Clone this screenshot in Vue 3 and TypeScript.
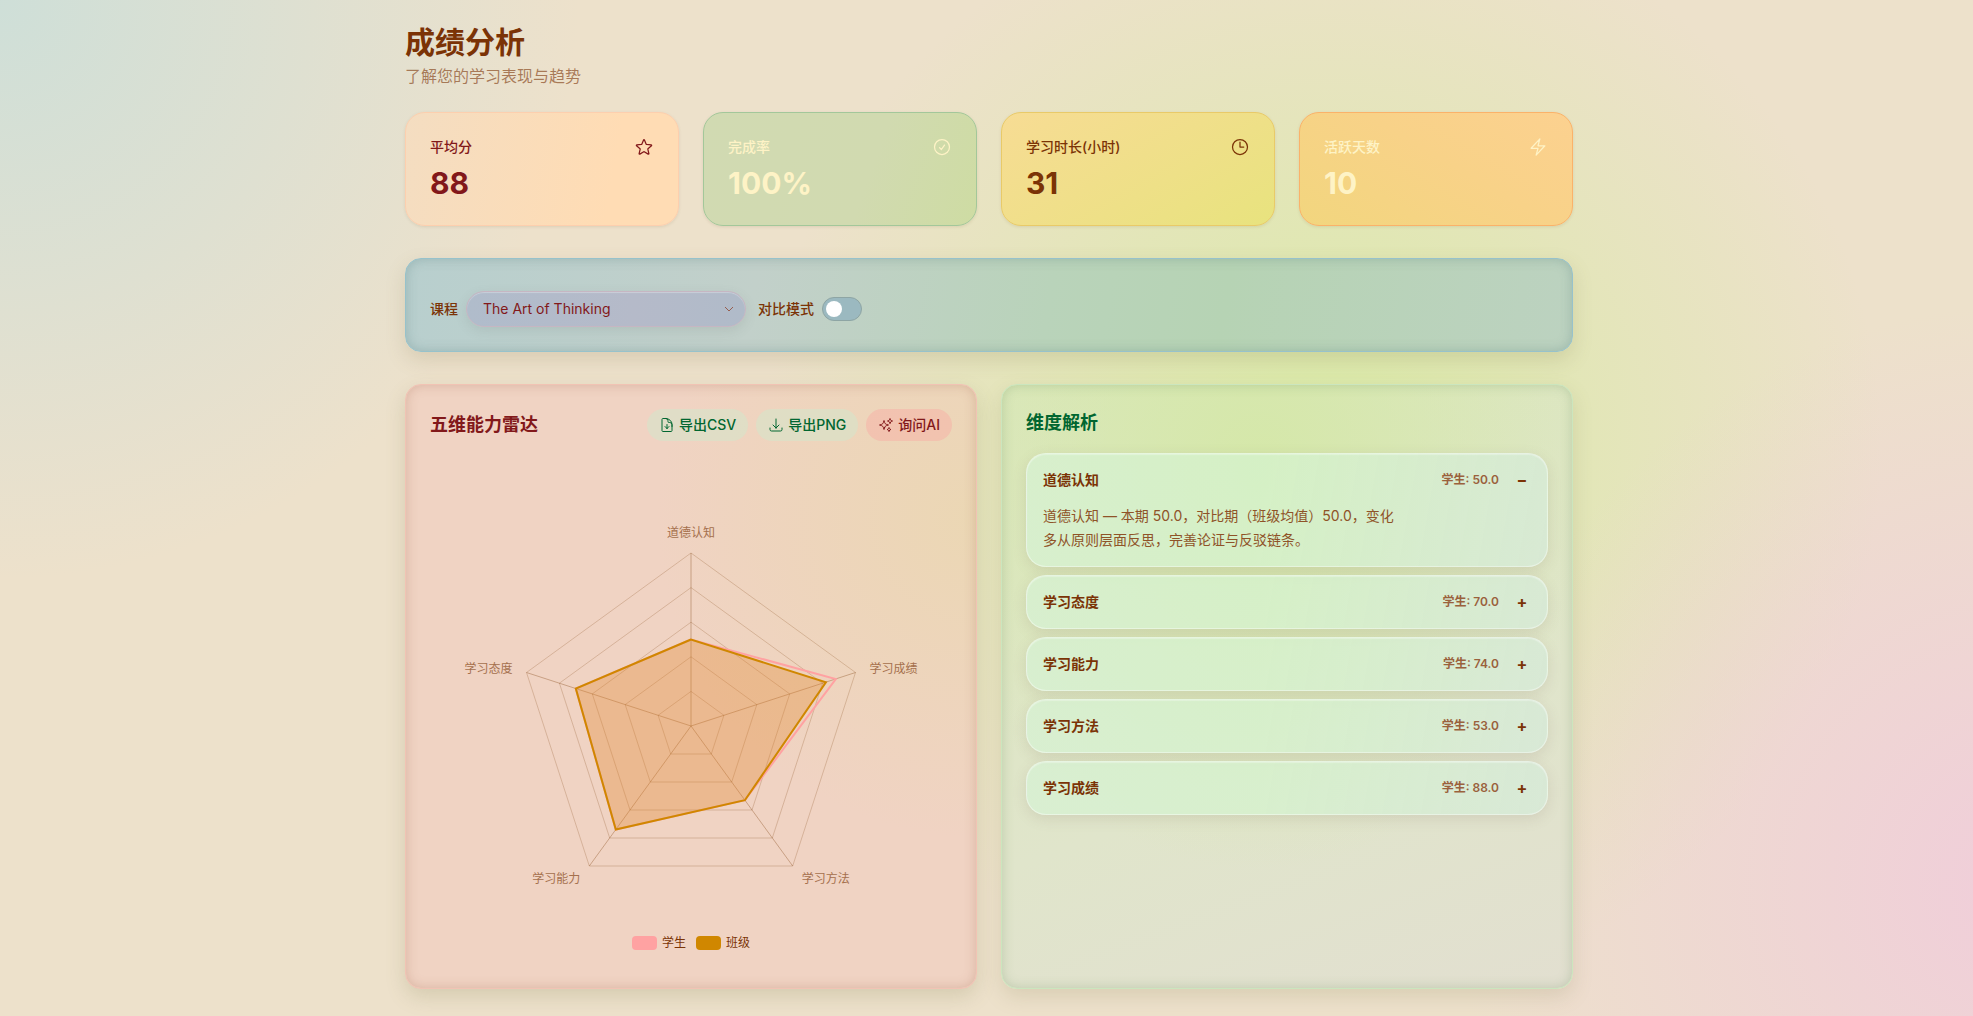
<script setup lang="ts">
import { computed, ref } from 'vue'

interface Stat {
  key: string
  label: string
  value: string
  icon: string
}

interface Dimension {
  name: string
  student: number
  group: number
  advice: string
}

const stats: Stat[] = [
  {
    key: 'average',
    label: '平均分',
    value: '88',
    icon: 'M11.48 3.499a.562.562 0 0 1 1.04 0l2.125 5.111a.563.563 0 0 0 .475.345l5.518.442c.499.04.701.663.321.988l-4.204 3.602a.563.563 0 0 0-.182.557l1.285 5.385a.562.562 0 0 1-.84.61l-4.725-2.885a.562.562 0 0 0-.586 0L6.982 20.54a.562.562 0 0 1-.84-.61l1.285-5.386a.562.562 0 0 0-.182-.557l-4.204-3.602a.562.562 0 0 1 .321-.988l5.518-.442a.563.563 0 0 0 .475-.345L11.48 3.5Z',
  },
  {
    key: 'completion',
    label: '完成率',
    value: '100%',
    icon: 'M9 12.75 11.25 15 15 9.75M21 12a9 9 0 1 1-18 0 9 9 0 0 1 18 0Z',
  },
  {
    key: 'hours',
    label: '学习时长(小时)',
    value: '31',
    icon: 'M12 6v6h4.5m4.5 0a9 9 0 1 1-18 0 9 9 0 0 1 18 0Z',
  },
  {
    key: 'days',
    label: '活跃天数',
    value: '10',
    icon: 'm3.75 13.5 10.5-11.25L12 10.5h8.25L9.75 21.75 12 13.5H3.75Z',
  },
]

const dimensions: Dimension[] = [
  { name: '道德认知', student: 50, group: 50, advice: '多从原则层面反思，完善论证与反驳链条。' },
  { name: '学习态度', student: 70, group: 70, advice: '保持稳定的学习节奏，及时复盘。' },
  { name: '学习能力', student: 74, group: 74, advice: '尝试更高难度的综合任务。' },
  { name: '学习方法', student: 53, group: 53, advice: '总结适合自己的方法并坚持使用。' },
  { name: '学习成绩', student: 88, group: 82, advice: '巩固优势，关注薄弱知识点。' },
]

const courses = ['The Art of Thinking']
const course = ref(courses[0])
const compare = ref(false)
const openName = ref('道德认知')

function toggle(name: string) {
  openName.value = openName.value === name ? '' : name
}

const centre = { x: 261, y: 277 }
const radius = 173

function vertex(index: number, ratio: number) {
  const angle = -Math.PI / 2 - (index * 2 * Math.PI) / dimensions.length
  return {
    x: Math.round((centre.x + Math.cos(angle) * radius * ratio) * 10) / 10,
    y: Math.round((centre.y + Math.sin(angle) * radius * ratio) * 10) / 10,
  }
}

function outline(ratios: number[]) {
  return ratios.map((ratio, i) => `${vertex(i, ratio).x},${vertex(i, ratio).y}`).join(' ')
}

const rings = [0.2, 0.4, 0.6, 0.8, 1].map((ratio) => outline(dimensions.map(() => ratio)))
const spokes = dimensions.map((_, i) => vertex(i, 1))
const studentShape = computed(() => outline(dimensions.map((d) => d.student / 100)))
const groupShape = computed(() => outline(dimensions.map((d) => d.group / 100)))

const anchors = ['middle', 'end', 'end', 'start', 'start'] as const
const axisLabels = dimensions.map((d, i) => {
  const p = vertex(i, 1)
  const side = anchors[i] === 'middle' ? 0 : anchors[i] === 'end' ? -1 : 1
  const low = p.y > centre.y
  return {
    name: d.name,
    anchor: anchors[i],
    x: p.x + side * (low ? 9 : 14),
    y: side === 0 ? p.y - 16 : low ? p.y + 17 : p.y,
  }
})
</script>

<template>
  <div class="page">
    <main class="content">
      <header class="heading">
        <h1>成绩分析</h1>
        <p>了解您的学习表现与趋势</p>
      </header>

      <section class="stats">
        <article v-for="s in stats" :key="s.key" class="stat" :class="s.key">
          <div class="stat-top">
            <span>{{ s.label }}</span>
            <svg class="stat-icon" viewBox="0 0 24 24" aria-hidden="true">
              <path :d="s.icon" />
            </svg>
          </div>
          <strong>{{ s.value }}</strong>
        </article>
      </section>

      <section class="panel filters">
        <div class="field">
          <label for="course">课程</label>
          <div class="select-wrap">
            <select id="course" v-model="course">
              <option v-for="c in courses" :key="c" :value="c">{{ c }}</option>
            </select>
            <svg class="chevron" viewBox="0 0 12 12" aria-hidden="true"><path d="M2 4l4 4 4-4" /></svg>
          </div>
        </div>
        <div class="field">
          <label for="compare">对比模式</label>
          <input id="compare" v-model="compare" class="switch" type="checkbox" role="switch" />
        </div>
      </section>

      <section class="columns">
        <article class="panel radar">
          <div class="panel-head">
            <h2>五维能力雷达</h2>
            <div class="actions">
              <button type="button" class="action export">
                <svg viewBox="0 0 24 24" aria-hidden="true">
                  <path d="M19.5 14.25v-2.625a3.375 3.375 0 0 0-3.375-3.375h-1.5A1.125 1.125 0 0 1 13.5 7.125v-1.5a3.375 3.375 0 0 0-3.375-3.375H8.25m.75 12 3 3m0 0 3-3m-3 3v-6m-1.5-9H5.625c-.621 0-1.125.504-1.125 1.125v17.25c0 .621.504 1.125 1.125 1.125h12.75c.621 0 1.125-.504 1.125-1.125V11.25a9 9 0 0 0-9-9Z" />
                </svg>
                <span>导出CSV</span>
              </button>
              <button type="button" class="action export">
                <svg viewBox="0 0 24 24" aria-hidden="true">
                  <path d="M3 16.5v2.25A2.25 2.25 0 0 0 5.25 21h13.5A2.25 2.25 0 0 0 21 18.75V16.5M16.5 12 12 16.5m0 0L7.5 12m4.5 4.5V3" />
                </svg>
                <span>导出PNG</span>
              </button>
              <button type="button" class="action ask">
                <svg viewBox="0 0 24 24" aria-hidden="true">
                  <path d="M9.813 15.904 9 18.75l-.813-2.846a4.5 4.5 0 0 0-3.09-3.09L2.25 12l2.846-.813a4.5 4.5 0 0 0 3.09-3.09L9 5.25l.813 2.846a4.5 4.5 0 0 0 3.09 3.09L15.75 12l-2.846.813a4.5 4.5 0 0 0-3.09 3.09ZM18.259 8.715 18 9.75l-.259-1.035a3.375 3.375 0 0 0-2.455-2.456L14.25 6l1.036-.259a3.375 3.375 0 0 0 2.455-2.456L18 2.25l.259 1.035a3.375 3.375 0 0 0 2.456 2.456L21.75 6l-1.035.259a3.375 3.375 0 0 0-2.456 2.456ZM16.894 20.567 16.5 21.75l-.394-1.183a2.25 2.25 0 0 0-1.423-1.423L13.5 18.75l1.183-.394a2.25 2.25 0 0 0 1.423-1.423l.394-1.183.394 1.183a2.25 2.25 0 0 0 1.423 1.423l1.183.394-1.183.394a2.25 2.25 0 0 0-1.423 1.423Z" />
                </svg>
                <span>询问AI</span>
              </button>
            </div>
          </div>

          <svg class="chart" viewBox="0 0 522 484" role="img" aria-label="五维能力雷达">
            <polygon v-for="(r, i) in rings" :key="i" class="ring" :points="r" />
            <line
              v-for="(p, i) in spokes"
              :key="i"
              class="spoke"
              :x1="centre.x"
              :y1="centre.y"
              :x2="p.x"
              :y2="p.y"
            />
            <polygon class="student" :points="studentShape" />
            <polygon class="group" :points="groupShape" />
            <text
              v-for="l in axisLabels"
              :key="l.name"
              class="axis"
              :x="l.x"
              :y="l.y"
              :text-anchor="l.anchor"
            >{{ l.name }}</text>
          </svg>
          <ul class="legend">
            <li><i class="swatch pink"></i>学生</li>
            <li><i class="swatch gold"></i>班级</li>
          </ul>
        </article>

        <article class="panel analysis">
          <h2>维度解析</h2>
          <div class="items">
            <section v-for="d in dimensions" :key="d.name" class="item">
              <button
                type="button"
                class="item-head"
                :aria-expanded="openName === d.name"
                @click="toggle(d.name)"
              >
                <span class="item-name">{{ d.name }}</span>
                <span class="item-score">学生: {{ d.student.toFixed(1) }}</span>
                <span class="item-sign">{{ openName === d.name ? '−' : '+' }}</span>
              </button>
              <div v-if="openName === d.name" class="item-body">
                <p>{{ d.name }} — 本期 {{ d.student.toFixed(1) }}，对比期（班级均值）{{ d.group.toFixed(1) }}，变化</p>
                <p>{{ d.advice }}</p>
              </div>
            </section>
          </div>
        </article>
      </section>
    </main>
  </div>
</template>

<style>
body {
  margin: 0;
}
</style>

<style scoped>
* {
  box-sizing: border-box;
}

.page {
  min-height: 100vh;
  padding: 24px 16px 24px 21px;
  background:
    radial-gradient(circle at 0 0, rgba(192, 222, 222, 0.68), rgba(192, 222, 222, 0) 580px),
    radial-gradient(circle at 103% 87%, rgba(241, 200, 222, 0.8), rgba(241, 200, 222, 0) 580px),
    radial-gradient(circle at 67% 44%, rgba(214, 236, 160, 0.85), rgba(214, 236, 160, 0) 560px),
    #ede1cb;
  color: #7b3306;
  font-family: Inter, "Noto Sans CJK SC", sans-serif;
  font-size: 14px;
  line-height: 20px;
}

.content {
  max-width: 1168px;
  margin: 0 auto;
}

h1,
h2,
p,
ul {
  margin: 0;
  padding: 0;
}

h1 {
  font-size: 30px;
  line-height: 36px;
  font-weight: 700;
}

.heading p {
  margin-top: 4px;
  font-size: 16px;
  line-height: 24px;
  color: rgba(123, 51, 6, 0.6);
}

.stats {
  display: grid;
  grid-template-columns: repeat(4, 1fr);
  gap: 24px;
  margin-top: 24px;
}

.stat {
  padding: 24px;
  border: 1px solid;
  border-radius: 20px;
  box-shadow: 0 1px 3px rgba(120, 100, 60, 0.14);
}

.stat-top {
  display: flex;
  align-items: center;
  justify-content: space-between;
  font-weight: 500;
}

.stat strong {
  display: block;
  margin-top: 8px;
  font-size: 30px;
  line-height: 36px;
  font-weight: 700;
}

.stat-icon {
  width: 20px;
  height: 20px;
  fill: none;
  stroke: currentColor;
  stroke-width: 1.5;
  stroke-linecap: round;
  stroke-linejoin: round;
}

.average {
  background: linear-gradient(100deg, #f4ddc1, #ffdcb4 75%);
  border-color: #fdcfae;
  color: #82181a;
}

.completion {
  background: linear-gradient(110deg, #d1dab2, #d1dab0 60%, #cedca3);
  border-color: #a3c79a;
  color: #fef3c6;
}

.hours {
  background: linear-gradient(150deg, #f7dc94, #eee087 60%, #e8e37e);
  border-color: #e9ca68;
  color: #7b3306;
}

.days {
  background: linear-gradient(30deg, #f2d67e, #f8d288 55%, #fcd190);
  border-color: #fbb269;
  color: #fef3c6;
}

.panel {
  border: 1px solid;
  border-radius: 16px;
}

.filters {
  display: flex;
  align-items: center;
  gap: 12px;
  margin-top: 32px;
  padding: 32px 24px 24px;
  background: linear-gradient(100deg, #b8cfce, #c2d0ca 30%, #b9d3ba 55%, #b6d3b4 70%, #bcd2c0);
  border-color: #97c2cb;
  box-shadow:
    inset 0 0 12px rgba(70, 110, 110, 0.28),
    0 8px 20px rgba(120, 110, 70, 0.18);
}

.field {
  display: flex;
  align-items: center;
  gap: 8px;
  font-weight: 500;
}

.select-wrap {
  display: grid;
  width: 280px;
  align-items: center;
}

.select-wrap > * {
  grid-area: 1 / 1;
}

select {
  appearance: none;
  width: 100%;
  height: 36px;
  padding: 0 32px 0 16px;
  border: 1px solid #c6b6c2;
  border-radius: 18px;
  background: linear-gradient(90deg, #b0bccb, #b5bac9 60%, #b0bbc9);
  box-shadow:
    inset 0 1px 1px rgba(255, 255, 255, 0.3),
    0 4px 12px rgba(90, 100, 100, 0.13);
  color: #82181a;
  font: inherit;
  font-weight: 400;
}

.chevron {
  justify-self: end;
  width: 12px;
  height: 12px;
  margin-right: 11px;
  fill: none;
  stroke: #965e50;
  stroke-width: 1;
  pointer-events: none;
}

.switch {
  appearance: none;
  display: flex;
  align-items: center;
  width: 40px;
  height: 24px;
  margin: 0;
  padding: 0 3px;
  border: 1px solid #8ea5a4;
  border-radius: 12px;
  background: #9bb9c0;
}

.switch::before {
  content: "";
  width: 16px;
  height: 16px;
  border-radius: 50%;
  background: #fff;
}

.switch:checked {
  justify-content: flex-end;
}

.columns {
  display: grid;
  grid-template-columns: 1fr 1fr;
  gap: 24px;
  margin-top: 32px;
}

.columns .panel {
  min-height: 605px;
  padding: 24px;
}

h2 {
  font-size: 18px;
  line-height: 28px;
  font-weight: 600;
}

.radar {
  background:
    radial-gradient(circle at 100% 22%, rgba(234, 216, 176, 0.8), rgba(234, 216, 176, 0) 320px),
    #f0d3c3;
  border-color: #f1c3b4;
  box-shadow:
    inset 0 0 12px rgba(150, 90, 60, 0.26),
    0 8px 20px rgba(120, 120, 70, 0.2);
  color: #82181a;
}

.panel-head {
  display: flex;
  align-items: center;
  justify-content: space-between;
}

.actions {
  display: flex;
  gap: 8px;
}

.action {
  display: flex;
  align-items: center;
  gap: 4px;
  height: 32px;
  padding: 0 12px;
  border: 0;
  border-radius: 16px;
  font: inherit;
  font-weight: 500;
}

.action svg {
  width: 16px;
  height: 16px;
  fill: none;
  stroke: currentColor;
  stroke-width: 1.5;
  stroke-linecap: round;
  stroke-linejoin: round;
}

.export {
  background: rgba(214, 228, 202, 0.6);
  color: #016630;
}

.ask {
  background: rgba(248, 176, 166, 0.5);
  color: #82181a;
}

.chart {
  display: block;
  width: 100%;
  height: 484px;
  margin-top: 8px;
}

.ring {
  fill: none;
  stroke: rgba(130, 70, 20, 0.24);
}

.spoke {
  stroke: rgba(130, 70, 20, 0.36);
}

.student {
  fill: rgba(255, 162, 162, 0.05);
  stroke: #ffa2a2;
  stroke-width: 2;
}

.group {
  fill: rgba(223, 138, 40, 0.32);
  stroke: #d08700;
  stroke-width: 2;
}

.axis {
  fill: #a5704d;
  font-size: 12px;
}

.legend {
  display: flex;
  justify-content: center;
  gap: 10px;
  color: #7b3306;
  font-size: 12px;
  list-style: none;
}

.legend li {
  display: flex;
  align-items: center;
  gap: 5px;
}

.swatch {
  width: 25px;
  height: 14px;
  border-radius: 4px;
}

.pink {
  background: #ffa2a2;
}

.gold {
  background: #d08700;
}

.analysis {
  background:
    radial-gradient(ellipse 340px 400px at 45% 14%, rgba(212, 232, 166, 0.9), rgba(212, 232, 166, 0)),
    linear-gradient(160deg, #dbe7bd, #e0e5cb 60%, #e2dfd0);
  border-color: #cbe6be;
  box-shadow:
    inset 0 0 12px rgba(90, 130, 80, 0.26),
    0 8px 20px rgba(130, 120, 80, 0.18);
}

.analysis h2 {
  color: #016630;
}

.items {
  display: grid;
  gap: 8px;
  margin-top: 16px;
}

.item {
  border: 1px solid rgba(255, 255, 255, 0.4);
  border-radius: 20px;
  background: linear-gradient(100deg, rgba(214, 242, 212, 0.72), rgba(213, 243, 208, 0.72) 45%, rgba(214, 234, 216, 0.78));
  box-shadow:
    inset 0 1px 1px rgba(255, 255, 255, 0.3),
    0 4px 14px rgba(130, 110, 100, 0.16);
}

.item-head {
  display: flex;
  align-items: center;
  width: 100%;
  padding: 16px;
  border: 0;
  background: none;
  color: #7b3306;
  font: inherit;
  text-align: left;
}

.item-name {
  flex: 1;
  font-weight: 600;
}

.item-score {
  margin-right: 14px;
  color: #9a613c;
  font-size: 12px;
  font-weight: 600;
}

.item-sign {
  width: 18px;
  font-size: 16px;
  font-weight: 700;
  text-align: center;
}

.item-body {
  margin-top: -2px;
  padding: 0 16px 14px;
  color: #8f5328;
  line-height: 24px;
}
</style>
